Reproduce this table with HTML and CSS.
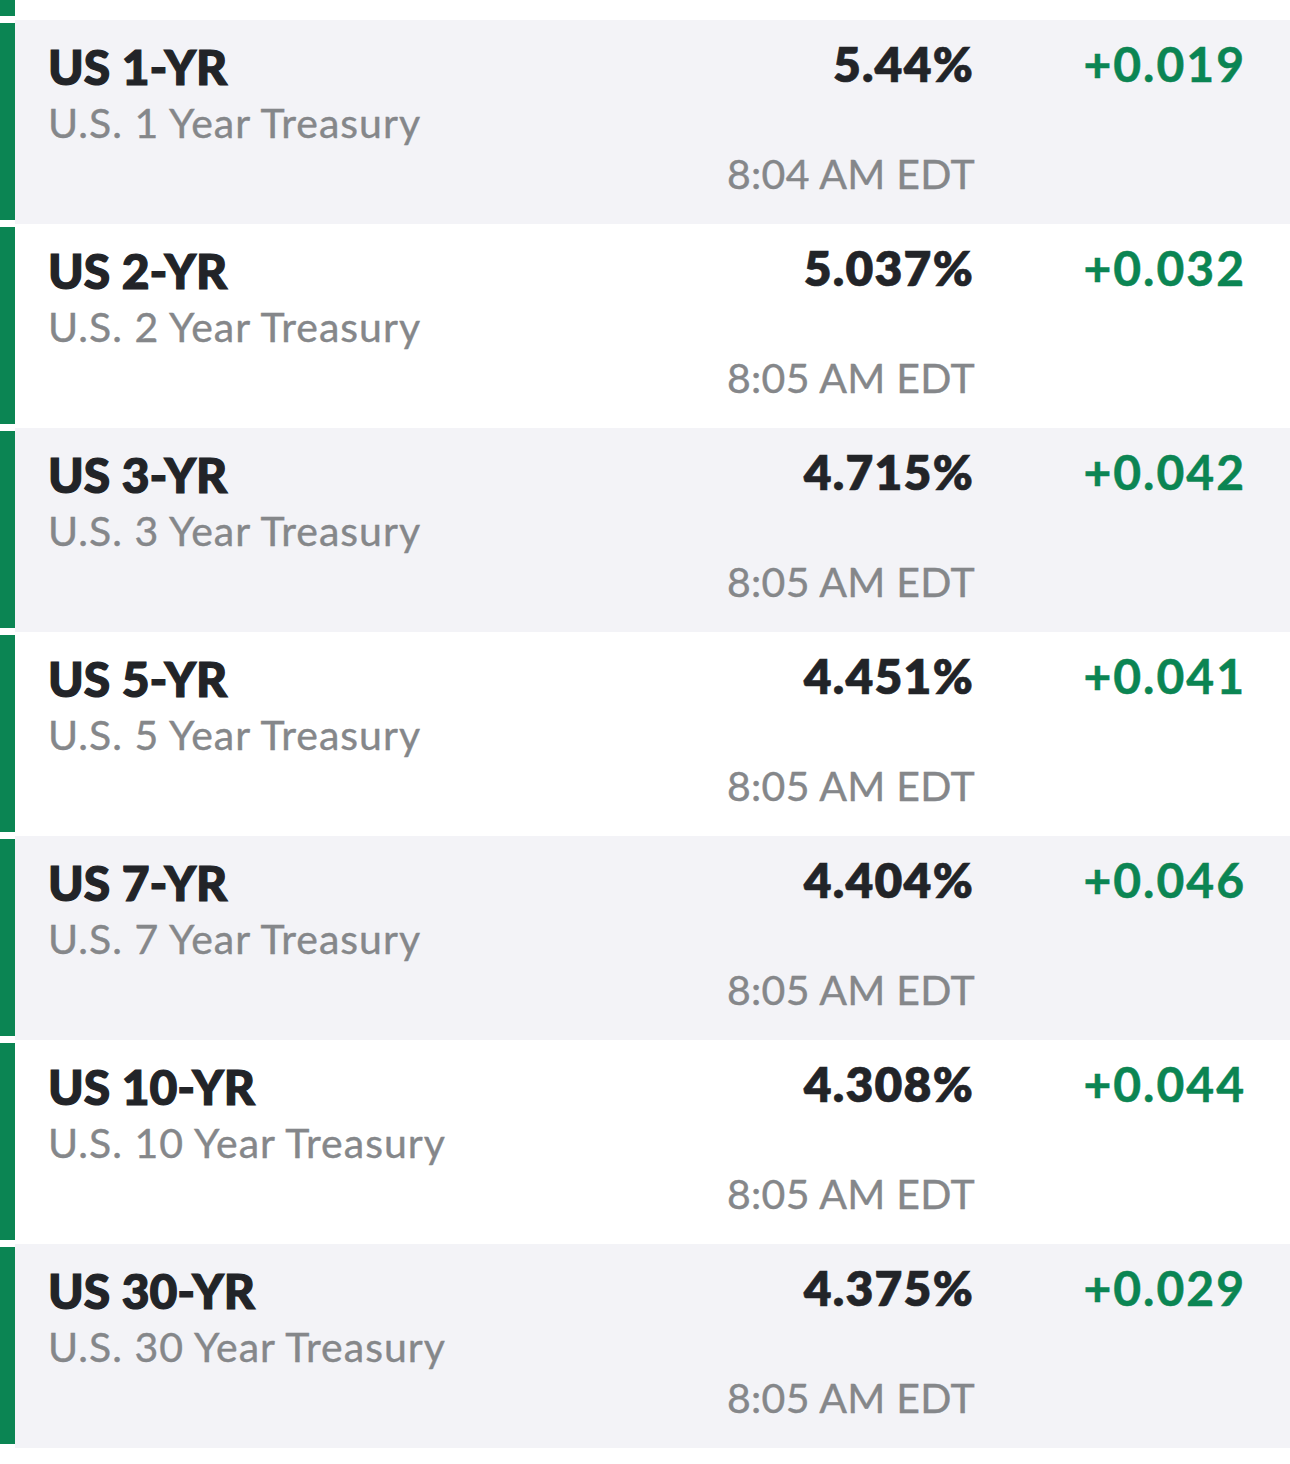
FILE: index.html
```html
<!DOCTYPE html>
<html lang="en">
<head>
    <meta charset="UTF-8">
    <meta name="viewport" content="width=device-width, initial-scale=1.0">
    <title>Treasuries</title>
    <link rel="stylesheet" href="styles.css">
</head>
<body>
    <div class="list">
        <div class="row stub">
            <div class="bar"></div>
        </div>

        <div class="row">
            <div class="bar"></div>
            <div class="body shaded">
                <div class="name">
                    <div class="symbol">US 1-YR</div>
                    <div class="desc">U.S. 1 Year Treasury</div>
                </div>
                <div class="quote">
                    <div class="price">5.44%</div>
                    <div class="time">8:04 AM EDT</div>
                </div>
                <div class="change up">+0.019</div>
            </div>
        </div>

        <div class="row">
            <div class="bar"></div>
            <div class="body">
                <div class="name">
                    <div class="symbol">US 2-YR</div>
                    <div class="desc">U.S. 2 Year Treasury</div>
                </div>
                <div class="quote">
                    <div class="price">5.037%</div>
                    <div class="time">8:05 AM EDT</div>
                </div>
                <div class="change up">+0.032</div>
            </div>
        </div>

        <div class="row">
            <div class="bar"></div>
            <div class="body shaded">
                <div class="name">
                    <div class="symbol">US 3-YR</div>
                    <div class="desc">U.S. 3 Year Treasury</div>
                </div>
                <div class="quote">
                    <div class="price">4.715%</div>
                    <div class="time">8:05 AM EDT</div>
                </div>
                <div class="change up">+0.042</div>
            </div>
        </div>

        <div class="row">
            <div class="bar"></div>
            <div class="body">
                <div class="name">
                    <div class="symbol">US 5-YR</div>
                    <div class="desc">U.S. 5 Year Treasury</div>
                </div>
                <div class="quote">
                    <div class="price">4.451%</div>
                    <div class="time">8:05 AM EDT</div>
                </div>
                <div class="change up">+0.041</div>
            </div>
        </div>

        <div class="row">
            <div class="bar"></div>
            <div class="body shaded">
                <div class="name">
                    <div class="symbol">US 7-YR</div>
                    <div class="desc">U.S. 7 Year Treasury</div>
                </div>
                <div class="quote">
                    <div class="price">4.404%</div>
                    <div class="time">8:05 AM EDT</div>
                </div>
                <div class="change up">+0.046</div>
            </div>
        </div>

        <div class="row">
            <div class="bar"></div>
            <div class="body">
                <div class="name">
                    <div class="symbol">US 10-YR</div>
                    <div class="desc">U.S. 10 Year Treasury</div>
                </div>
                <div class="quote">
                    <div class="price">4.308%</div>
                    <div class="time">8:05 AM EDT</div>
                </div>
                <div class="change up">+0.044</div>
            </div>
        </div>

        <div class="row">
            <div class="bar"></div>
            <div class="body shaded">
                <div class="name">
                    <div class="symbol">US 30-YR</div>
                    <div class="desc">U.S. 30 Year Treasury</div>
                </div>
                <div class="quote">
                    <div class="price">4.375%</div>
                    <div class="time">8:05 AM EDT</div>
                </div>
                <div class="change up">+0.029</div>
            </div>
        </div>
    </div>
</body>
</html>
```

FILE: styles.css
```css
body {
    margin: 0;
    background: #ffffff;
    font-family: Lato, "Open Sans", Arial, sans-serif;
}
.list {
    display: flex;
    flex-direction: column;
}
.row {
    display: flex;
    height: 204px;
}
.row.stub {
    height: 20px;
}
.bar {
    width: 15px;
    flex-shrink: 0;
    margin: 3px 0 4px;
    background: #0b8553;
}
.stub .bar {
    margin-top: 0;
}
.body {
    flex: 1;
    display: grid;
    grid-template-columns: 1fr auto 272px;
    align-items: start;
    padding: 15px 44px 0 33px;
}
.body.shaded {
    background: #f3f3f7;
}
.name {
    margin-top: 3px;
}
.symbol {
    font-size: 48px;
    line-height: 1.2;
    font-weight: 900;
    color: #222428;
    -webkit-text-stroke: 1.2px #222428;
}
.desc {
    margin-top: 2px;
    font-size: 41px;
    line-height: 1.2;
    letter-spacing: 1px;
    color: #85878a;
    -webkit-text-stroke: 0.4px #85878a;
}
.quote {
    text-align: right;
}
.price {
    font-size: 48px;
    line-height: 1.2;
    font-weight: 800;
    letter-spacing: 1.2px;
    color: #222428;
    -webkit-text-stroke: 0.6px #222428;
}
.time {
    margin-top: 56px;
    margin-right: -1px;
    font-size: 41px;
    line-height: 1.2;
    letter-spacing: 0.3px;
    color: #85878a;
    -webkit-text-stroke: 0.4px #85878a;
}
.change {
    text-align: right;
    font-size: 48px;
    line-height: 1.2;
    font-weight: 700;
    letter-spacing: 2px;
}
.change.up {
    color: #0b8553;
    -webkit-text-stroke: 0.5px #0b8553;
}
```
